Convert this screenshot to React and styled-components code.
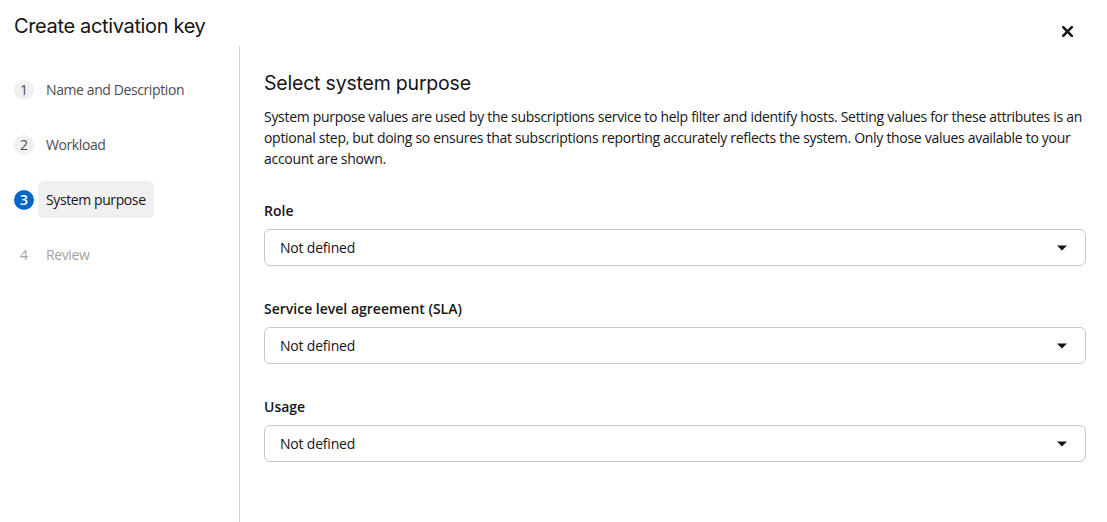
import styled, { createGlobalStyle } from "styled-components";

const GlobalStyle = createGlobalStyle`
  html, body {
    margin: 0;
    padding: 0;
    background: #ffffff;
    font-family: "Open Sans", "Noto Sans", sans-serif;
    color: #151515;
  }
`;

const Shell = styled.div`
  width: 1107px;
  height: 522px;
  display: flex;
  flex-direction: column;
  overflow: hidden;
`;

const Header = styled.div`
  height: 46px;
  display: flex;
  align-items: flex-start;
  justify-content: space-between;
  padding: 0 33px 0 14px;
  box-sizing: border-box;
`;

const Title = styled.h1`
  margin: 13px 0 0;
  font-family: Inter, "Open Sans", sans-serif;
  font-size: 20px;
  font-weight: 400;
  line-height: 27px;
  letter-spacing: -0.35px;
`;

const CloseButton = styled.button`
  margin-top: 24px;
  width: 14px;
  height: 14px;
  padding: 0;
  border: none;
  background: transparent;
  display: flex;
  align-items: center;
  justify-content: center;
  cursor: pointer;
`;

const Body = styled.div`
  flex: 1;
  display: flex;
  min-height: 0;
`;

const Nav = styled.nav`
  width: 240px;
  flex-shrink: 0;
  border-right: 1px solid #d2d2d2;
  padding: 25px 0 0 14px;
  box-sizing: border-box;
  display: flex;
  flex-direction: column;
  gap: 18px;
`;

const NavItem = styled.div`
  display: flex;
  align-items: center;
  gap: 4px;
  height: 37px;
`;

const StepNum = styled.span`
  width: 20px;
  height: 20px;
  border-radius: 50%;
  flex-shrink: 0;
  display: flex;
  align-items: center;
  justify-content: center;
  font-size: 14px;
  line-height: 1;
  background: ${({ $state }) =>
    $state === "current" ? "#0066cc" : $state === "disabled" ? "transparent" : "#f0f0f0"};
  color: ${({ $state }) =>
    $state === "current" ? "#ffffff" : $state === "disabled" ? "#a3a3a3" : "#4d4d4d"};
  font-weight: ${({ $state }) => ($state === "current" ? 600 : 400)};
`;

const StepLabel = styled.span`
  padding: 8px;
  border-radius: 6px;
  font-size: 14px;
  line-height: 21px;
  letter-spacing: -0.4px;
  background: ${({ $state }) => ($state === "current" ? "#f0f0f0" : "transparent")};
  color: ${({ $state }) =>
    $state === "current" ? "#151515" : $state === "disabled" ? "#a3a3a3" : "#4d4d4d"};
`;

const Main = styled.main`
  flex: 1;
  padding: 23px 21px 0 24px;
  box-sizing: border-box;
`;

const Heading = styled.h2`
  margin: 0;
  font-family: Inter, "Open Sans", sans-serif;
  font-size: 19.5px;
  font-weight: 400;
  line-height: 28px;
  letter-spacing: -0.2px;
`;

const Description = styled.p`
  margin: 9px 0 0;
  font-size: 14px;
  line-height: 21px;
  letter-spacing: -0.3px;
  color: #151515;
`;

const Form = styled.div`
  margin-top: 31px;
  display: flex;
  flex-direction: column;
  gap: 32px;
`;

const Group = styled.div`
  display: flex;
  flex-direction: column;
  gap: 8px;
`;

const Label = styled.label`
  font-size: 14px;
  font-weight: 600;
  line-height: 21px;
  letter-spacing: 0;
`;

const Toggle = styled.button`
  height: 37px;
  width: 100%;
  display: flex;
  align-items: center;
  justify-content: space-between;
  padding: 0 18px 0 15px;
  box-sizing: border-box;
  border: 1px solid #c7c7c7;
  border-radius: 6px;
  background: #ffffff;
  font-family: inherit;
  font-size: 14px;
  letter-spacing: -0.2px;
  color: #151515;
  cursor: pointer;
`;

const Caret = () => (
  <svg width="10" height="6" viewBox="0 0 10 6">
    <path d="M0 0.5 H10 L5 5.5 Z" fill="#151515" />
  </svg>
);

const CloseIcon = () => (
  <svg width="11" height="11" viewBox="0 0 11 11">
    <path d="M1.2 1.2 L9.8 9.8 M9.8 1.2 L1.2 9.8" stroke="#151515" strokeWidth="2.6" strokeLinecap="round" />
  </svg>
);

const steps = [
  { n: 1, label: "Name and Description", state: "done" },
  { n: 2, label: "Workload", state: "done" },
  { n: 3, label: "System purpose", state: "current" },
  { n: 4, label: "Review", state: "disabled" },
];

const fields = ["Role", "Service level agreement (SLA)", "Usage"];

export default function App() {
  return (
    <>
      <GlobalStyle />
      <Shell>
        <Header>
          <Title>Create activation key</Title>
          <CloseButton aria-label="Close">
            <CloseIcon />
          </CloseButton>
        </Header>
        <Body>
          <Nav>
            {steps.map((s) => (
              <NavItem key={s.n}>
                <StepNum $state={s.state}>{s.n}</StepNum>
                <StepLabel $state={s.state}>{s.label}</StepLabel>
              </NavItem>
            ))}
          </Nav>
          <Main>
            <Heading>Select system purpose</Heading>
            <Description>
              System purpose values are used by the subscriptions service to help filter and identify hosts. Setting
              values for these attributes is an optional step, but doing so ensures that subscriptions reporting
              accurately reflects the system. Only those values available to your account are shown.
            </Description>
            <Form>
              {fields.map((f) => (
                <Group key={f}>
                  <Label>{f}</Label>
                  <Toggle>
                    <span>Not defined</span>
                    <Caret />
                  </Toggle>
                </Group>
              ))}
            </Form>
          </Main>
        </Body>
      </Shell>
    </>
  );
}
